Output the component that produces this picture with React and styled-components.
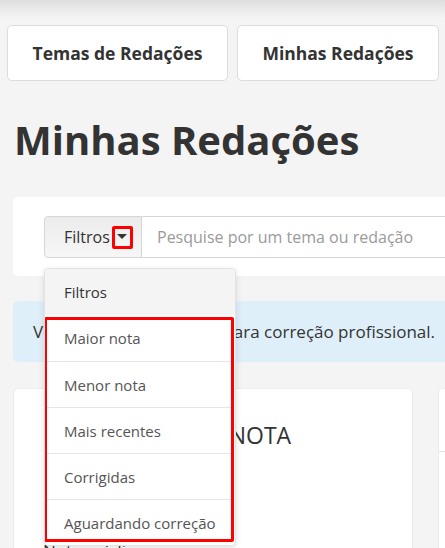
import styled, {createGlobalStyle} from 'styled-components'

const GlobalStyle = createGlobalStyle`
  body {
    margin: 0;
    background: #f4f4f4;
    font-family: 'Open Sans', 'Noto Sans', sans-serif;
    color: #333;
    overflow: hidden;
  }
`

const filters = [
  'Maior nota',
  'Menor nota',
  'Mais recentes',
  'Corrigidas',
  'Aguardando correção',
]

const Caret = () => (
  <svg width="10" height="6" viewBox="0 0 10 6">
    <path d="M0 0 L10 0 L5 5 Z" fill="#333" />
  </svg>
)

const App = () => (
  <>
    <GlobalStyle />
    <Page>
      <TopShade />
      <TabRow>
        <Tab $width={221}>Temas de Redações</Tab>
        <Tab $width={202}>Minhas Redações</Tab>
      </TabRow>
      <Main>
        <Title>Minhas Redações</Title>
        <SearchCard>
          <InputGroup>
            <FilterButton>
              Filtros
              <CaretBox>
                <Caret />
              </CaretBox>
            </FilterButton>
            <SearchInput placeholder="Pesquise por um tema ou redação" />
            <Menu>
              <MenuHeader>Filtros</MenuHeader>
              {filters.map(item => (
                <MenuItem key={item}>{item}</MenuItem>
              ))}
              <Highlight />
            </Menu>
          </InputGroup>
        </SearchCard>
        <Alert>Você possui 10 créditos para correção profissional.</Alert>
        <CardRow>
          <Card $width={400}>
            <CardTitle>MAIOR NOTA</CardTitle>
            <CardLabel>Nota média</CardLabel>
          </Card>
          <Card $width={400}>
            <CardHead />
          </Card>
        </CardRow>
      </Main>
    </Page>
  </>
)
export default App

const Page = styled.div`
  width: 900px;
  position: relative;
`
const TopShade = styled.div`
  height: 18px;
  background: linear-gradient(#dedede, #f4f4f4);
`
const TabRow = styled.div`
  display: flex;
  gap: 9px;
  padding: 7px 0 0 7px;
`
const Tab = styled.div`
  width: ${props => props.$width}px;
  height: 56px;
  box-sizing: border-box;
  display: flex;
  align-items: center;
  justify-content: center;
  background: #fff;
  border: 1px solid #dcdcdc;
  border-radius: 5px;
  font-size: 17.5px;
  font-weight: 700;
  color: #333;
`
const Main = styled.div`
  padding-left: 13px;
`
const Title = styled.h1`
  margin: 32px 0 0 1px;
  font-size: 40px;
  line-height: 54px;
  font-weight: 700;
  color: #333;
`
const SearchCard = styled.div`
  margin-top: 30px;
  width: 860px;
  height: 79px;
  box-sizing: border-box;
  background: #fff;
  border-radius: 5px;
  padding: 19px 31px;
`
const InputGroup = styled.div`
  display: flex;
  position: relative;
  height: 42px;
`
const FilterButton = styled.div`
  width: 98px;
  box-sizing: border-box;
  display: flex;
  align-items: center;
  padding-left: 19px;
  background: linear-gradient(#ececec, #f6f6f6);
  border: 1px solid #d6d6d6;
  border-radius: 4px 0 0 4px;
  font-size: 16px;
  color: #333;
`
const CaretBox = styled.span`
  display: flex;
  align-items: center;
  justify-content: center;
  width: 21px;
  height: 23px;
  box-sizing: border-box;
  border: 3px solid #ff0000;
  border-radius: 2px;
  margin-left: 2px;
`
const SearchInput = styled.input`
  flex: 1;
  border: 1px solid #d6d6d6;
  border-left: none;
  padding: 0 15px;
  font-family: 'Open Sans', sans-serif;
  font-size: 16px;
  color: #333;
  outline: none;
  &::placeholder {
    color: #9a9a9a;
  }
`
const Menu = styled.div`
  position: absolute;
  top: 52px;
  left: 0;
  width: 190px;
  background: #fff;
  border: 1px solid #e2e2e2;
  border-radius: 4px;
  box-shadow: 0 2px 6px rgba(0, 0, 0, 0.12);
  z-index: 5;
  overflow: hidden;
`
const MenuHeader = styled.div`
  height: 46px;
  display: flex;
  align-items: center;
  padding-left: 19px;
  background: #f4f4f4;
  font-size: 15px;
  color: #333;
`
const MenuItem = styled.div`
  height: 46px;
  box-sizing: border-box;
  display: flex;
  align-items: center;
  margin: 0 4px 0 2px;
  padding-left: 17px;
  border-top: 1px solid #e6e6e6;
  font-size: 15px;
  color: #555;
  &:nth-child(2) {
    border-top: none;
  }
`
const Highlight = styled.div`
  position: absolute;
  top: 48px;
  left: -1px;
  width: 190px;
  height: 225px;
  box-sizing: border-box;
  border: 3px solid #ff0000;
  border-radius: 2px;
  pointer-events: none;
`
const Alert = styled.div`
  margin-top: 25px;
  width: 860px;
  height: 61px;
  box-sizing: border-box;
  display: flex;
  align-items: center;
  padding-left: 20px;
  background: #dfeff9;
  border-radius: 5px;
  font-size: 17px;
  color: #333;
`
const CardRow = styled.div`
  display: flex;
  gap: 25px;
  margin-top: 26px;
`
const Card = styled.div`
  width: ${props => props.$width}px;
  height: 300px;
  background: #fff;
  border-radius: 5px;
  border: 1px solid #ececec;
  box-sizing: border-box;
  padding: 30px 29px;
`
const CardTitle = styled.div`
  font-size: 23px;
  line-height: 32px;
  color: #333;
  padding-left: 106px;
`
const CardLabel = styled.div`
  margin-top: 88px;
  font-size: 17px;
  color: #333;
`
const CardHead = styled.div`
  height: 62px;
  margin: -30px -29px 0;
  border-bottom: 1px solid #e2e2e2;
`
